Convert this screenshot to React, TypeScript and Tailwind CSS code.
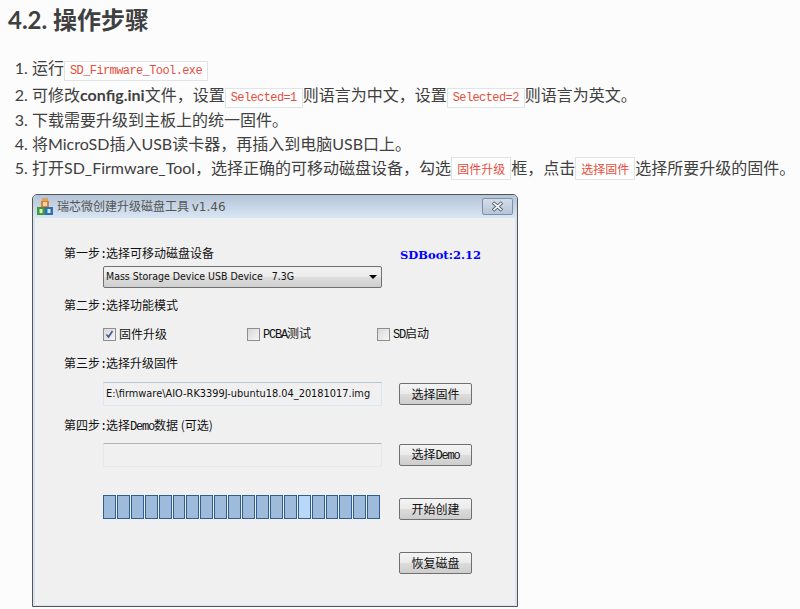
const Code = ({ children }: { children: React.ReactNode }) => (
  <code className="border border-[#e1e4e5] bg-white px-[5px] py-[2px] font-['Liberation_Mono','Noto_Sans_CJK_SC',monospace] text-[12px] tracking-[-0.6px] text-[#e74c3c]">
    {children}
  </code>
);

const CnCode = ({ children }: { children: React.ReactNode }) => (
  <code className="border border-[#e1e4e5] bg-white px-[5px] py-[2px] font-['Noto_Sans_CJK_SC',sans-serif] text-[12px] text-[#e74c3c]">
    {children}
  </code>
);

const Latin = ({ children }: { children: React.ReactNode }) => (
  <span className="font-['Liberation_Mono',monospace] text-[12px] tracking-[-1.2px]">{children}</span>
);

const StepLabel = ({ children }: { children: React.ReactNode }) => (
  <div className="h-4 text-[12px] leading-4 text-[#111]">{children}</div>
);

const WinButton = ({ children }: { children: React.ReactNode }) => (
  <button className="block h-[22px] w-[73px] rounded-[2px] border border-[#707070] bg-[linear-gradient(#f4f4f4_0%,#ebebeb_48%,#dcdcdc_52%,#cdcdcd_100%)] text-[12px] leading-none text-[#111]">
    {children}
  </button>
);

const Check = ({ checked, children, className }: { checked?: boolean; children: React.ReactNode; className: string }) => (
  <div className={`flex h-4 items-center gap-[3px] text-[12px] text-[#111] ${className}`}>
    <span className="flex h-[13px] w-[13px] items-center justify-center border border-[#8e8f8f] bg-[linear-gradient(135deg,#d8d8d8,#f6f6f6)]">
      {checked && (
        <svg width="9" height="9" viewBox="0 0 9 9" fill="none">
          <path d="M1.5 4.5 L3.5 7 L7.5 1" stroke="#4a5f97" strokeWidth="1.8" />
        </svg>
      )}
    </span>
    <span>{children}</span>
  </div>
);

const segments = Array.from({ length: 20 }, (_, i) => i);

export default function App() {
  return (
    <div className="h-[609px] w-[800px] overflow-hidden bg-[#fcfcfc] font-['Lato','Noto_Sans_CJK_SC',sans-serif] text-[16px] text-[#404040]">
      <h2 className="h-9 pl-2 pt-1 text-[24px] font-bold leading-[32px]">4.2. 操作步骤</h2>

      <ol className="mt-5 list-decimal whitespace-nowrap pl-8 leading-6">
        <li className="h-6">运行<Code>SD_Firmware_Tool.exe</Code></li>
        <li className="mt-[3px] h-6">可修改<b>config.ini</b>文件，设置<Code>Selected=1</Code>则语言为中文，设置<Code>Selected=2</Code>则语言为英文。</li>
        <li className="mt-px h-6">下载需要升级到主板上的统一固件。</li>
        <li className="h-6">将MicroSD插入USB读卡器，再插入到电脑USB口上。</li>
        <li className="h-6">打开SD_Firmware_Tool，选择正确的可移动磁盘设备，勾选<CnCode>固件升级</CnCode>框，点击<CnCode>选择固件</CnCode>选择所要升级的固件。</li>
      </ol>

      {/* dialog screenshot */}
      <div className="ml-8 mt-[14px] h-[413px] w-[486px] overflow-hidden rounded-t-[5px] border border-[#555] bg-[#d6e3f2] font-['Noto_Sans_CJK_SC',sans-serif]">
        <div className="flex h-[23px] items-center bg-[linear-gradient(#b4c4d7,#d9e6f4)] pl-1 pr-1">
          <svg width="16" height="17" viewBox="0 0 16 17">
            <rect x="5" y="0" width="6" height="3" fill="#d9a35c" />
            <rect x="4" y="3" width="8" height="6" fill="#e2793f" />
            <rect x="6" y="4" width="4" height="4" fill="#f4d9a0" />
            <rect x="0" y="9" width="8" height="8" fill="#3d9a3a" />
            <rect x="8" y="9" width="8" height="8" fill="#2f6fb5" />
            <rect x="2.5" y="11" width="3" height="4" fill="#e6f2c8" />
            <rect x="10.5" y="11" width="3" height="4" fill="#d5e6f8" />
          </svg>
          <span className="ml-1 text-[12px] text-[#555]">瑞芯微创建升级磁盘工具 <span className="font-['DejaVu_Sans',sans-serif]">v1.46</span></span>
          <span className="ml-auto flex h-[17px] w-[31px] items-center justify-center rounded-[2px] border border-[#7f8fa5] bg-[linear-gradient(#d3dde9,#b7c5d9)]">
            <svg width="13" height="11" viewBox="0 0 13 11">
              <path d="M2 1.5 L11 9.5 M11 1.5 L2 9.5" stroke="#4c5666" strokeWidth="3.4" />
              <path d="M2.5 1.8 L10.5 9.2 M10.5 1.8 L2.5 9.2" stroke="#f4f6f8" strokeWidth="1.8" />
            </svg>
          </span>
        </div>

        <div className="mx-[2px] h-[387px] bg-[#f0f0f0] pl-[29px] pt-[27px]">
          <div className="flex h-4">
            <div className="w-[335px]">
              <StepLabel>第一步<Latin>:</Latin>选择可移动磁盘设备</StepLabel>
            </div>
            <div className="ml-px font-['DejaVu_Serif',serif] text-[11.5px] font-bold leading-5 text-[#0000ff]">SDBoot:2.12</div>
          </div>
          <div className="ml-[39px] mt-[5px] flex h-[22px] w-[279px] items-center justify-between rounded-[2px] border border-[#707070] bg-[linear-gradient(#f2f2f2_0%,#ebebeb_48%,#dddddd_52%,#cfcfcf_100%)] pl-[2px] pr-[4px] font-['DejaVu_Sans_Condensed','DejaVu_Sans',sans-serif] text-[10.5px] text-[#111]">
            <span className="whitespace-pre">Mass Storage Device USB Device   7.3G</span>
            <svg width="8" height="4" viewBox="0 0 8 4"><path d="M0 0 H8 L4 4 Z" fill="#000" /></svg>
          </div>

          <div className="mt-[9px]"><StepLabel>第二步<Latin>:</Latin>选择功能模式</StepLabel></div>

          <div className="ml-[39px] mt-[13px] flex">
            <Check checked className="w-[144px]">固件升级</Check>
            <Check className="w-[130px]"><Latin>PCBA</Latin>测试</Check>
            <Check className=""><Latin>SD</Latin>启动</Check>
          </div>

          <div className="mt-[13px]"><StepLabel>第三步<Latin>:</Latin>选择升级固件</StepLabel></div>

          <div className="mt-[11px] flex items-center pl-[39px]">
            <div className="flex h-6 w-[279px] items-center whitespace-nowrap border border-[#dbe7f2] border-t-[#b9c7d4] pl-[2px] font-['DejaVu_Sans_Condensed','DejaVu_Sans',sans-serif] text-[10.9px] text-[#111]">E:\firmware\AIO-RK3399J-ubuntu18.04_20181017.img</div>
            <div className="ml-[17px]"><WinButton>选择固件</WinButton></div>
          </div>

          <div className="mt-[11px]"><StepLabel>第四步<Latin>:</Latin>选择<Latin>Demo</Latin>数据 (可选)</StepLabel></div>

          <div className="mt-[10px] flex items-center pl-[39px]">
            <div className="h-6 w-[279px] border border-[#e3e9ef] border-t-[#b5b5b5]" />
            <div className="ml-[17px]"><WinButton>选择<Latin>Demo</Latin></WinButton></div>
          </div>

          <div className="mt-[28px] flex items-start pl-[39px]">
            <div className="flex h-6 w-[277px] gap-px">
              {segments.map((i) => (
                <div
                  key={i}
                  className={`flex-1 border border-[#2f5f92] ${i === 14 ? "bg-[#b9d7f8]" : "bg-[#9fbbdb]"}`}
                />
              ))}
            </div>
            <div className="ml-[19px] mt-[3px]"><WinButton>开始创建</WinButton></div>
          </div>

          <div className="ml-[335px] mt-[32px]"><WinButton>恢复磁盘</WinButton></div>
        </div>
      </div>
    </div>
  );
}
